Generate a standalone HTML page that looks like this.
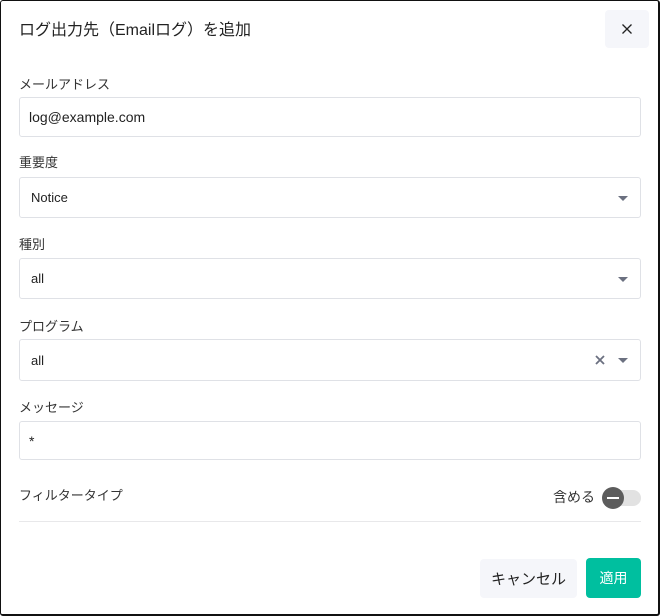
<!DOCTYPE html>
<html><head><meta charset="utf-8"><style>
*{box-sizing:border-box;margin:0;padding:0}
body{width:660px;height:616px;background:#fff;font-family:"Liberation Sans","Noto Sans CJK JP",sans-serif;color:#222;position:relative;overflow:hidden}
.frame{position:absolute;left:0;top:0;width:660px;height:616px;border:1px solid #111;border-right-width:2px;border-bottom-width:2px;border-radius:3px}
.abs{position:absolute}
.title{left:19px;top:16px;font-size:16px;color:#222}
.close{left:605px;top:10px;width:44px;height:38px;background:#f5f6fa;border-radius:4px}
.lbl{left:19px;font-size:13px;color:#333}
.box{left:19px;width:622px;border:1px solid #dfe1e6;border-radius:3px;font-size:13px;color:#222;padding-left:11px;display:flex;align-items:center}
.caret{position:absolute;right:12px;top:50%;margin-top:-2px;width:0;height:0;border-left:5px solid transparent;border-right:5px solid transparent;border-top:5px solid #6b7080}
.btn{border-radius:4px;font-size:14px;display:flex;align-items:center;justify-content:center}
</style></head><body>
<div class="frame"></div>
<div class="abs title">ログ出力先（Emailログ）を追加</div>
<div class="abs close"><svg width="44" height="38" viewBox="0 0 44 38"><path d="M17.5 14.5l9 9M26.5 14.5l-9 9" stroke="#222" stroke-width="1.3"/></svg></div>

<div class="abs lbl" style="top:74px">メールアドレス</div>
<div class="abs box" style="top:97px;height:40px;font-size:14px;padding-left:9px">log@example.com</div>

<div class="abs lbl" style="top:152px">重要度</div>
<div class="abs box" style="top:177px;height:41px">Notice<span class="caret"></span></div>

<div class="abs lbl" style="top:234px">種別</div>
<div class="abs box" style="top:258px;height:41px">all<span class="caret"></span></div>

<div class="abs lbl" style="top:316px">プログラム</div>
<div class="abs box" style="top:339px;height:42px">all<span class="caret"></span>
<svg class="abs" style="left:575px;top:15px" width="10" height="10" viewBox="0 0 10 10"><path d="M1 1l8 8M9 1l-8 8" stroke="#6b7080" stroke-width="1.8"/></svg></div>

<div class="abs lbl" style="top:397px">メッセージ</div>
<div class="abs box" style="top:421px;height:39px;font-size:14px;padding-left:9px">*</div>

<div class="abs lbl" style="top:485px">フィルタータイプ</div>
<div class="abs" style="left:553px;top:487px;font-size:14px;color:#333">含める</div>
<div class="abs" style="left:606px;top:490px;width:35px;height:16px;background:#e2e2e2;border-radius:8px"></div>
<div class="abs" style="left:602px;top:487px;width:22px;height:22px;background:#5c5c5c;border-radius:50%"></div>
<div class="abs" style="left:607px;top:497px;width:12px;height:2px;background:#fff"></div>
<div class="abs" style="left:19px;top:521px;width:622px;height:1px;background:#e8e8ea"></div>

<div class="abs btn" style="left:480px;top:559px;width:97px;height:39px;background:#f5f6fa;color:#222;font-size:15px">キャンセル</div>
<div class="abs btn" style="left:586px;top:558px;width:55px;height:40px;background:#00bf9f;color:#fff">適用</div>
</body></html>
